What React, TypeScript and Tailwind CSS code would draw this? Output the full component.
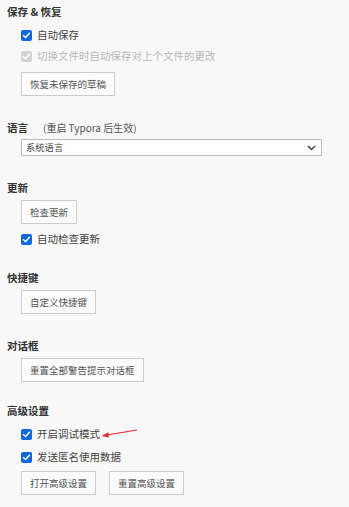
import React from "react";

const font = { fontFamily: '"Noto Sans CJK SC", "Noto Sans", sans-serif' };

function Check({ disabled = false }: { disabled?: boolean }) {
  return (
    <span
      className={`flex items-center justify-center w-[11px] h-[11px] rounded-[2px] ${
        disabled ? "bg-[#d4d4d4]" : "bg-[#0f68d8]"
      }`}
    >
      <svg width="9" height="9" viewBox="0 0 10 10">
        <path d="M1.8 5.2 L4 7.3 L8.3 2.6" fill="none" stroke="white" strokeWidth="1.7" strokeLinecap="round" strokeLinejoin="round" />
      </svg>
    </span>
  );
}

function Row({ label, disabled = false, mt }: { label: string; disabled?: boolean; mt: string }) {
  return (
    <div className={`flex items-center h-[16px] ml-[14px] gap-[5px] ${mt}`}>
      <Check disabled={disabled} />
      <span className={`text-[10.5px] leading-[16px] ${disabled ? "text-[#b8b8b8]" : "text-[#444]"}`}>{label}</span>
    </div>
  );
}

function Btn({ label, mt = "", ml = "ml-[14px]" }: { label: string; mt?: string; ml?: string }) {
  return (
    <button
      className={`h-[24px] px-[8px] border border-[#cbcbcb] bg-[#fbfbfb] text-[9.5px] text-[#555] leading-[22px] ${ml} ${mt}`}
    >
      {label}
    </button>
  );
}

function H({ children, mt }: { children: React.ReactNode; mt: string }) {
  return <div className={`h-[14px] leading-[14px] text-[10.5px] font-bold text-[#333] ${mt}`}>{children}</div>;
}

export default function App() {
  return (
    <div className="relative w-[349px] h-[507px] bg-[#f8f8f8] pl-[7px] pt-[5px] overflow-hidden" style={font}>
      <H mt="mt-0">保存 &amp; 恢复</H>
      <Row label="自动保存" mt="mt-[8px]" />
      <Row label="切换文件时自动保存对上个文件的更改" disabled mt="mt-[5px]" />
      <div className="flex mt-[8px]">
        <Btn label="恢复未保存的草稿" />
      </div>

      <div className="flex items-center h-[14px] mt-[25px]">
        <span className="text-[10.5px] leading-[14px] font-bold text-[#333]">语言</span>
        <span className="ml-[15px] text-[10px] leading-[14px] text-[#555]">(重启 Typora 后生效)</span>
      </div>
      <div className="mt-[4px] ml-[14px] w-[301px] h-[17px] border border-[#bdbdbd] bg-white flex items-center justify-between pl-[4px] pr-[5px]">
        <span className="text-[9.3px] leading-[15px] text-[#444]">系统语言</span>
        <svg width="9" height="6" viewBox="0 0 9 6">
          <path d="M1 1 L4.5 4.5 L8 1" fill="none" stroke="#444" strokeWidth="1.5" />
        </svg>
      </div>

      <H mt="mt-[25px]">更新</H>
      <div className="flex mt-[5px]">
        <Btn label="检查更新" />
      </div>
      <Row label="自动检查更新" mt="mt-[7px]" />

      <H mt="mt-[24px]">快捷键</H>
      <div className="flex mt-[5px]">
        <Btn label="自定义快捷键" />
      </div>

      <H mt="mt-[25px]">对话框</H>
      <div className="flex mt-[5px]">
        <Btn label="重置全部警告提示对话框" />
      </div>

      <H mt="mt-[22px]">高级设置</H>
      <Row label="开启调试模式" mt="mt-[8px]" />
      <Row label="发送匿名使用数据" mt="mt-[7px]" />
      <div className="flex mt-[6px]">
        <Btn label="打开高级设置" />
        <Btn label="重置高级设置" ml="ml-[13px]" />
      </div>

      <svg className="absolute left-0 top-0 pointer-events-none" width="349" height="507">
        <line x1="137" y1="430" x2="107" y2="435" stroke="#e8262a" strokeWidth="1.1" />
        <path d="M101.5 436 L108.5 432.2 L108.8 437.6 Z" fill="#e8262a" />
      </svg>
    </div>
  );
}
